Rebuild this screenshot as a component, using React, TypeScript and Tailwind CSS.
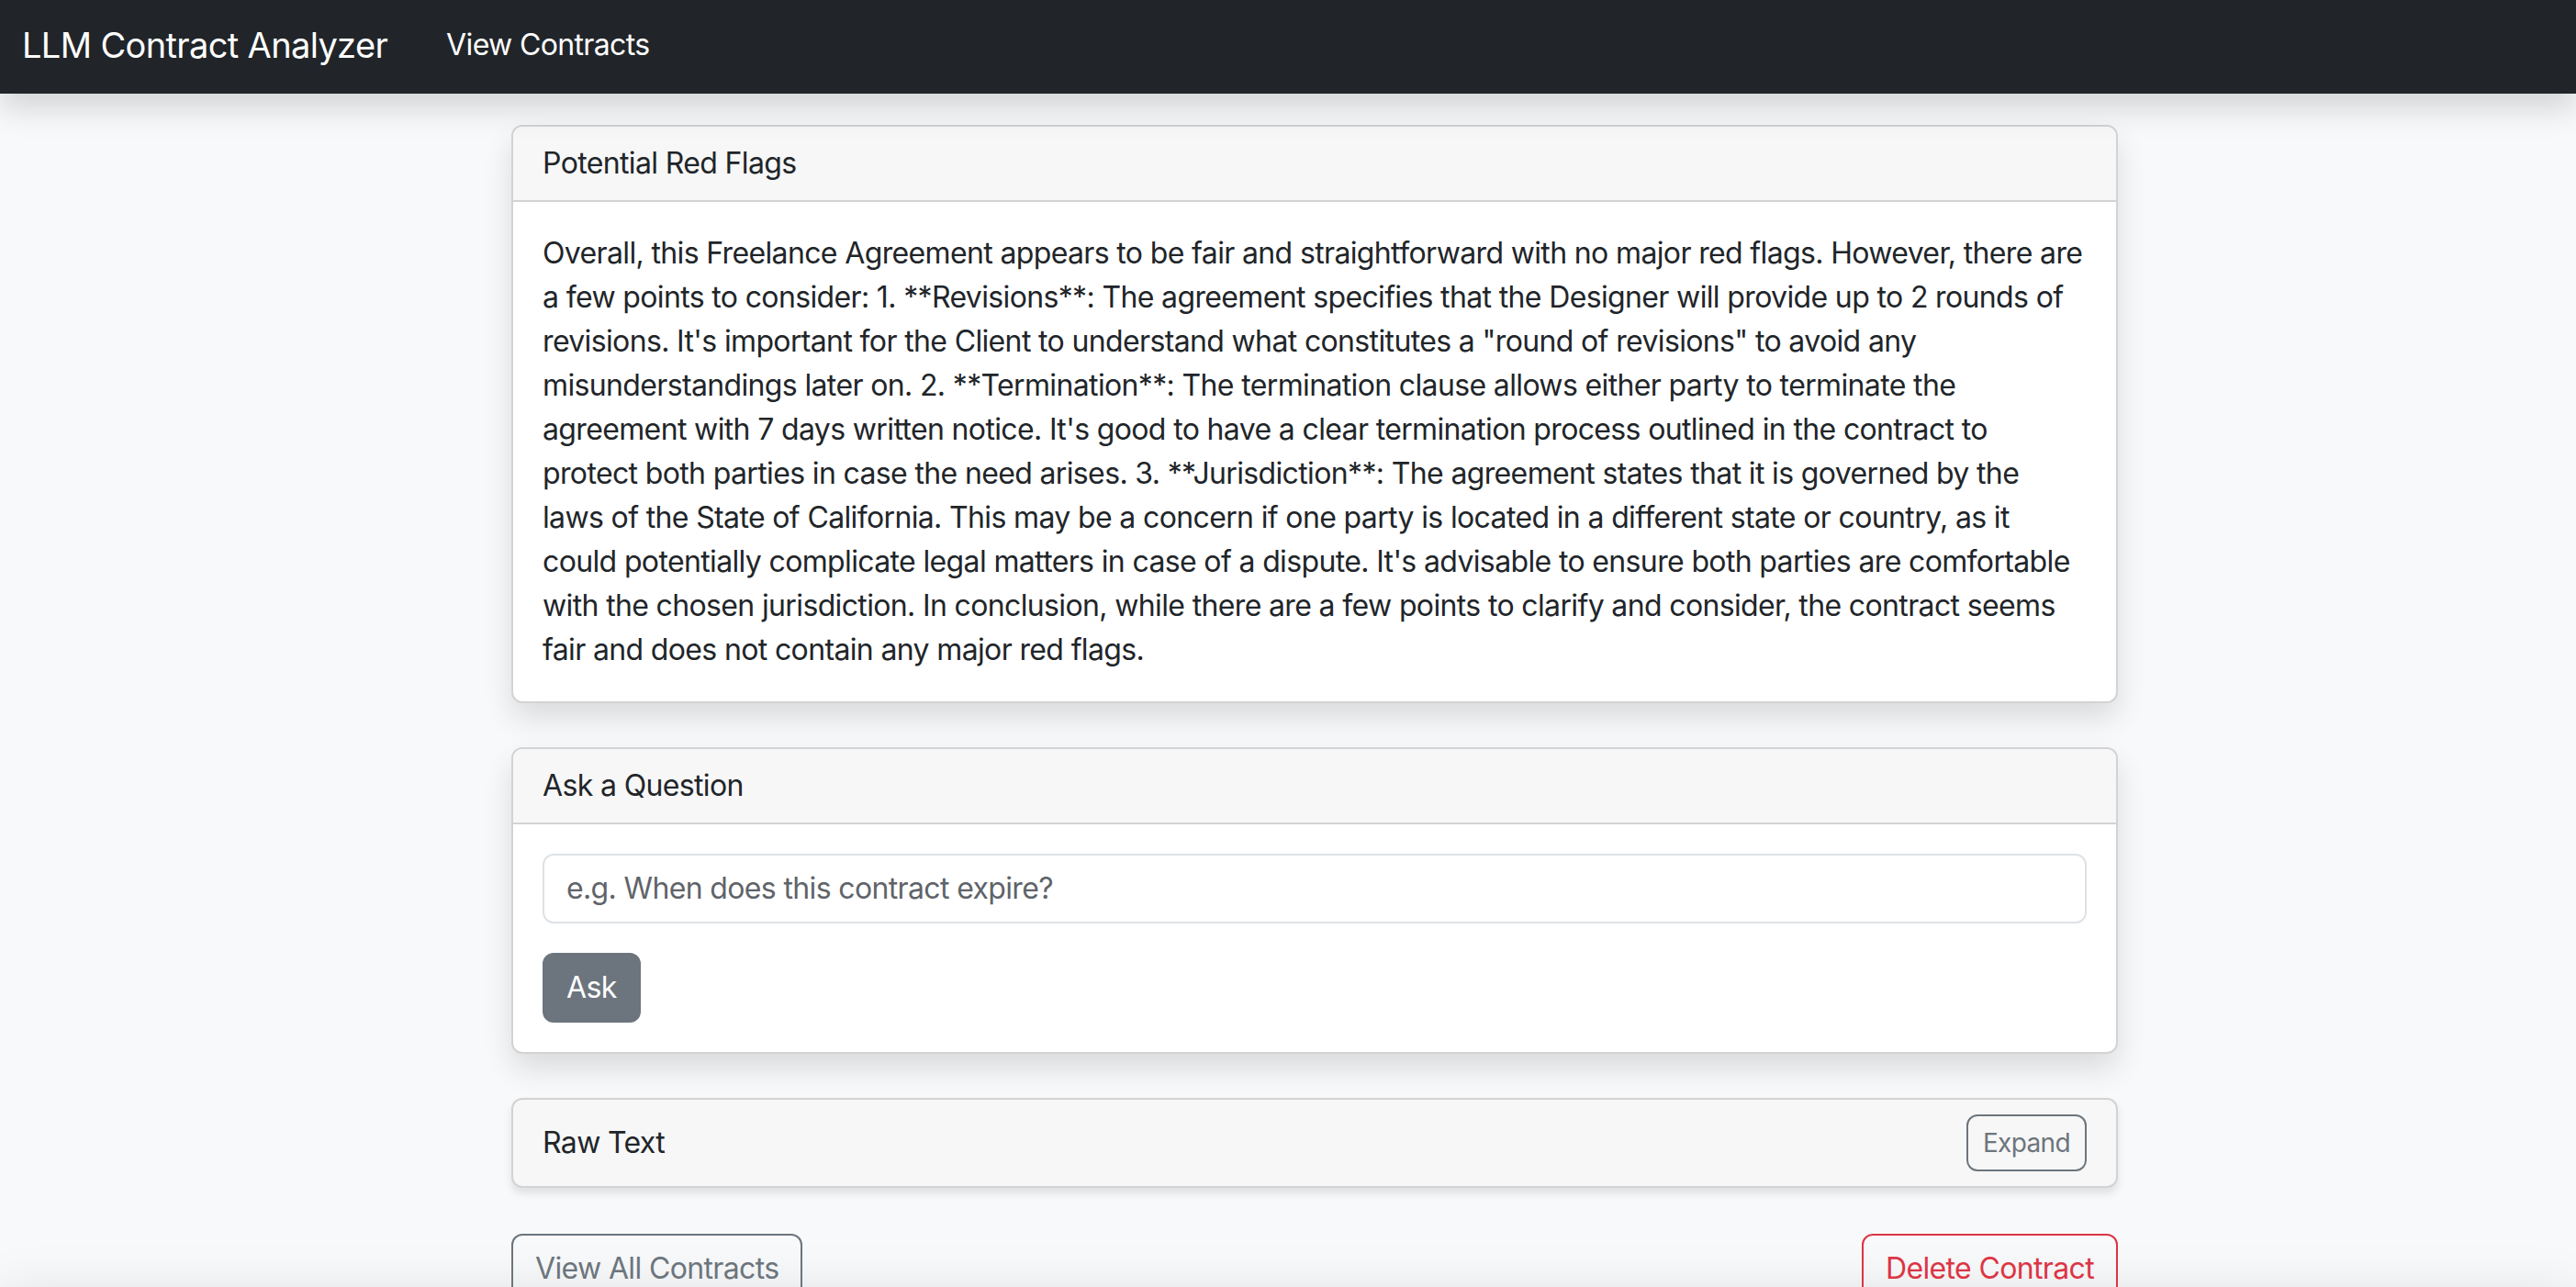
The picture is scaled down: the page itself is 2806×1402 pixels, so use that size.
import React, { useState } from 'react';

const redFlags =
  'Overall, this Freelance Agreement appears to be fair and straightforward with no major red flags. However, there are a few points to consider: 1. **Revisions**: The agreement specifies that the Designer will provide up to 2 rounds of revisions. It\'s important for the Client to understand what constitutes a "round of revisions" to avoid any misunderstandings later on. 2. **Termination**: The termination clause allows either party to terminate the agreement with 7 days written notice. It\'s good to have a clear termination process outlined in the contract to protect both parties in case the need arises. 3. **Jurisdiction**: The agreement states that it is governed by the laws of the State of California. This may be a concern if one party is located in a different state or country, as it could potentially complicate legal matters in case of a dispute. It\'s advisable to ensure both parties are comfortable with the chosen jurisdiction. In conclusion, while there are a few points to clarify and consider, the contract seems fair and does not contain any major red flags.';

function Card({ title, children }: { title: string; children: React.ReactNode }) {
  return (
    <div className="bg-white border-2 border-[#d3d3d4] rounded-[12px] shadow-[0_16px_32px_rgba(0,0,0,0.12)] overflow-hidden">
      <div className="px-[32px] py-[16px] bg-[#f7f7f7] border-b-2 border-[#d3d3d4]">{title}</div>
      <div className="p-[32px]">{children}</div>
    </div>
  );
}

export default function App() {
  const [question, setQuestion] = useState('');
  const [expanded, setExpanded] = useState(false);

  return (
    <div className="min-h-screen bg-[#f8f9fa] text-[#212529] font-['Inter',sans-serif] text-[32px] leading-[48px] tracking-[-0.02em] overflow-hidden">
      {/* Navbar */}
      <nav className="h-[102px] bg-[#212529] px-[24px] pb-[4px] flex items-center shadow-[0_16px_32px_rgba(0,0,0,0.15)] relative z-10">
        <a href="#" className="text-white text-[38px] leading-[60px] mr-[64px]">LLM Contract Analyzer</a>
        <a href="#" className="text-white text-[32px]">View Contracts</a>
      </nav>

      <div className="ml-[557px] w-[1750px] pt-[34px]">
        <Card title="Potential Red Flags">
          <p>{redFlags}</p>
        </Card>

        <div className="mt-[48px]">
          <Card title="Ask a Question">
            <form onSubmit={(e) => e.preventDefault()}>
              <input
                type="text"
                value={question}
                onChange={(e) => setQuestion(e.target.value)}
                placeholder="e.g. When does this contract expire?"
                className="w-full bg-white border-2 border-[#dee2e6] rounded-[12px] px-[24px] py-[12px] text-[32px] leading-[48px] placeholder:text-[#5f646a] outline-none"
              />
              <button
                type="submit"
                className="mt-[32px] bg-[#6c757d] text-white border-2 border-[#6c757d] rounded-[12px] px-[24px] py-[12px] text-[32px] leading-[48px]"
              >
                Ask
              </button>
            </form>
          </Card>
        </div>

        <div className="mt-[48px] bg-[#f7f7f7] border-2 border-[#d3d3d4] rounded-[12px] shadow-[0_6px_10px_rgba(0,0,0,0.1)] px-[32px] py-[16px] flex items-center justify-between">
          <span>Raw Text</span>
          <button
            onClick={() => setExpanded(!expanded)}
            className="border-2 border-[#6c757d] text-[#6c757d] rounded-[12px] px-[16px] py-[8px] text-[28px] leading-[42px]"
          >
            {expanded ? 'Collapse' : 'Expand'}
          </button>
        </div>

        <div className="mt-[50px] flex justify-between">
          <button className="border-2 border-[#6c757d] text-[#6c757d] rounded-[12px] px-[24px] py-[12px] text-[32px] leading-[48px]">
            View All Contracts
          </button>
          <button className="border-2 border-[#dc3545] text-[#dc3545] rounded-[12px] px-[24px] py-[12px] text-[32px] leading-[48px]">
            Delete Contract
          </button>
        </div>
      </div>

      <footer className="mt-[8px] h-[200px] bg-[#f8f9fa] shadow-[0_-10px_60px_rgba(0,0,0,0.15)]" />
    </div>
  );
}
